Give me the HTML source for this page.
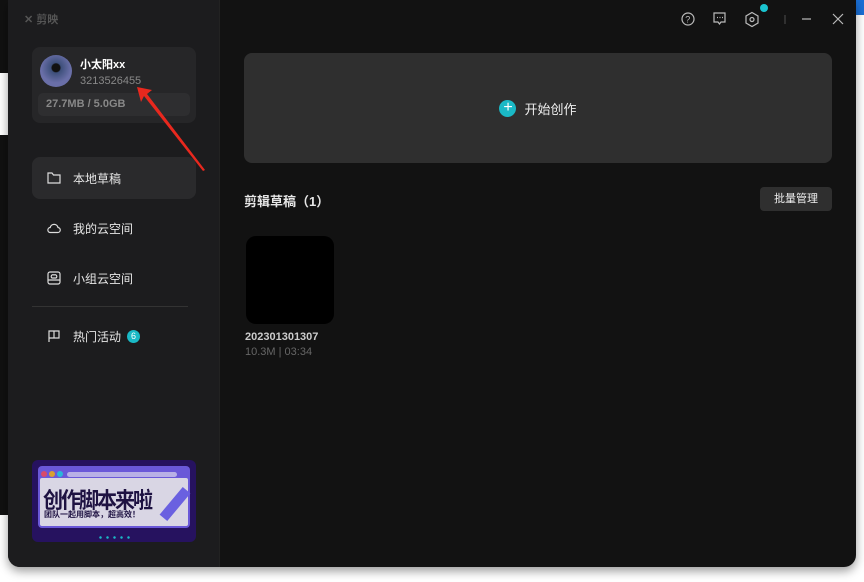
<!DOCTYPE html>
<html><head><meta charset="utf-8"><style>
*{margin:0;padding:0;box-sizing:border-box}
body{width:864px;height:582px;background:#fff;position:relative;overflow:hidden;font-family:"Liberation Sans","Noto Sans CJK SC",sans-serif}
.abs{position:absolute}
.win{position:absolute;left:8px;top:0;width:848px;height:567px;background:#121212;border-radius:0 0 12px 12px;overflow:hidden;box-shadow:0 4px 10px rgba(0,0,0,.4)}
.side{position:absolute;left:0;top:0;width:212px;height:567px;background:#1c1c1e;border-right:1px solid #222}
.nav{position:absolute;left:24px;width:164px;height:42px;border-radius:8px;color:#e6e6e6;font-size:12px;display:flex;align-items:center;padding-left:15px}
.nav svg{margin-right:12px}
</style></head><body>
<div class="abs" style="left:0;top:0;width:8px;height:73px;background:#111"></div>
<div class="abs" style="left:0;top:135px;width:8px;height:380px;background:#111"></div>
<div class="abs" style="left:855px;top:0;width:9px;height:15px;background:#1a6fd6"></div>
<div class="win">
 <div class="side">
  <div class="abs" style="left:16px;top:11px;color:#555;font-size:11px;font-weight:bold">✕ 剪映</div>
  <div class="abs" style="left:24px;top:47px;width:164px;height:76px;background:#262628;border-radius:8px">
   <div class="abs" style="left:8px;top:8px;width:32px;height:32px;border-radius:50%;background:radial-gradient(circle at 50% 40%,#111 4px,#3d4f7a 5px,#6a6fa8 15px)"></div>
   <div class="abs" style="left:48px;top:9px;color:#fff;font-size:11px;font-weight:bold">小太阳xx</div>
   <div class="abs" style="left:48px;top:28px;color:#888;font-size:11px">3213526455</div>
   <div class="abs" style="left:6px;top:46px;width:152px;height:23px;background:#2e2e30;border-radius:5px;color:#888;font-size:11px;font-weight:bold;padding:5px 0 0 8px">27.7MB / 5.0GB</div>
  </div>
  <div class="nav" style="top:157px;background:#2a2a2c"><svg width="14" height="12" viewBox="0 0 14 12" fill="none" stroke="#ddd" stroke-width="1.2"><path d="M1 1h4l1.5 2H13v8H1z"/></svg>本地草稿</div>
  <div class="nav" style="top:207px"><svg width="14" height="12" viewBox="0 0 14 12" fill="none" stroke="#ddd" stroke-width="1.2"><path d="M3.5 10.5h7a2.5 2.5 0 0 0 .5-5A4 4 0 0 0 3.2 5.5a2.5 2.5 0 0 0 .3 5z"/></svg>我的云空间</div>
  <div class="nav" style="top:257px"><svg width="14" height="14" viewBox="0 0 14 14" fill="none" stroke="#ddd" stroke-width="1.2"><rect x="1" y="1" width="12" height="12" rx="2"/><path d="M1 9h12M5 7h4a1.5 1.5 0 0 0-2-3 1.5 1.5 0 0 0-2 3z"/></svg>小组云空间</div>
  <div class="abs" style="left:24px;top:306px;width:156px;height:1px;background:#333"></div>
  <div class="nav" style="top:315px"><svg width="14" height="14" viewBox="0 0 14 14" fill="none" stroke="#ddd" stroke-width="1.2"><path d="M2 13V2h10v7H2M7 2v7"/></svg>热门活动<span style="display:inline-block;width:13px;height:13px;border-radius:50%;background:#1ab9c6;color:#fff;font-size:9px;text-align:center;line-height:13px;margin-left:6px">6</span></div>
  <div class="abs" style="left:24px;top:460px;width:164px;height:82px;background:#26125f;border-radius:6px">
   <div class="abs" style="left:6px;top:6px;width:152px;height:62px;background:#6a58d8;border-radius:4px"></div>
   <div class="abs" style="left:8px;top:18px;width:148px;height:48px;background:#d9d6e4;border-radius:2px"></div>
   <div class="abs" style="left:9px;top:11px;width:6px;height:6px;border-radius:50%;background:#d84a6a"></div>
   <div class="abs" style="left:17px;top:11px;width:6px;height:6px;border-radius:50%;background:#d9a030"></div>
   <div class="abs" style="left:25px;top:11px;width:6px;height:6px;border-radius:50%;background:#29b7d9"></div>
   <div class="abs" style="left:35px;top:12px;width:110px;height:5px;border-radius:3px;background:#b8b0e6"></div>
   <div class="abs" style="left:11px;top:24px;font-size:20px;font-weight:bold;color:#1e1242;letter-spacing:-2px;transform:scaleY(1.1)">创作脚本来啦</div>
   <div class="abs" style="left:12px;top:49px;font-size:8px;font-weight:bold;color:#1e1242">团队一起用脚本，超高效！</div>
   <div class="abs" style="left:138px;top:26px;width:10px;height:36px;background:#6a60e0;transform:rotate(40deg)"></div>
   <div class="abs" style="left:65px;top:76px;width:34px;height:3px;background:radial-gradient(circle,#1ab9c6 1px,transparent 1.5px) 0 0/7px 3px"></div>
  </div>
 </div>
 <svg class="abs" style="left:124px;top:82px" width="80" height="90"><path d="M5 5 L20 8 L15 12 L73 88 L71 89 L12 14 L9 20z" fill="#e8281e"/></svg>
 <svg class="abs" style="left:673px;top:11px" width="170" height="18" fill="none" stroke="#bbb" stroke-width="1.2">
  <circle cx="7" cy="8" r="6"/><text x="4.3" y="11.5" fill="#bbb" stroke="none" font-size="9">?</text>
  <path d="M33 2h11v9h-4l-1.5 2-1.5-2h-4z"/><path d="M36 6.5h1M38.5 6.5h1M41 6.5h1"/>
  <path d="M71 1.5l6 3.5v7l-6 3.5-6-3.5v-7z"/><circle cx="71" cy="8.5" r="2"/>
  <path d="M104 4v9" stroke="#444"/><path d="M121 8h9"/><path d="M152 3l10 10M162 3l-10 10"/>
 </svg>
 <div class="abs" style="left:752px;top:4px;width:8px;height:8px;border-radius:50%;background:#1ac3cf"></div>
 <div class="abs" style="left:236px;top:53px;width:588px;height:110px;background:#2f2f2f;border-radius:8px;display:flex;align-items:center;justify-content:center;color:#eee;font-size:13px"><span style="display:inline-block;width:17px;height:17px;border-radius:50%;background:#1ab9c6;color:#fff;text-align:center;line-height:16px;font-size:16px;margin-right:8px">+</span>开始创作</div>
 <div class="abs" style="left:236px;top:191px;color:#e6e6e6;font-size:13px;font-weight:bold">剪辑草稿（1）</div>
 <div class="abs" style="left:752px;top:187px;width:72px;height:24px;background:#2f2f2f;border-radius:4px;color:#eee;font-size:11px;text-align:center;line-height:24px">批量管理</div>
 <div class="abs" style="left:238px;top:236px;width:88px;height:88px;background:#000;border-radius:10px"></div>
 <div class="abs" style="left:237px;top:331px;color:#ccc;font-size:11px;font-weight:bold">202301301307</div>
 <div class="abs" style="left:237px;top:346px;color:#666;font-size:11px">10.3M | 03:34</div>
</div>
</body></html>
